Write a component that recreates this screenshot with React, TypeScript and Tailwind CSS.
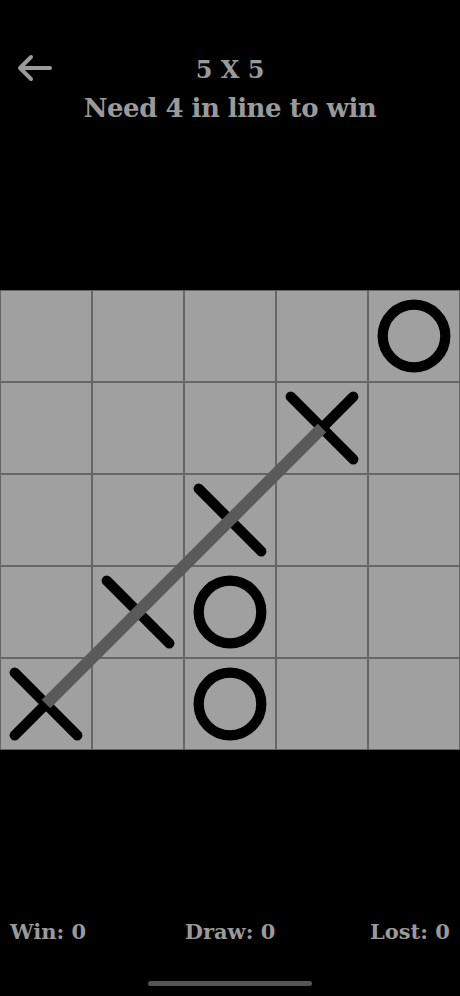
import React from 'react'

type Mark = 'X' | 'O' | null

const board: Mark[][] = [
  [null, null, null, null, 'O'],
  [null, null, null, 'X', null],
  [null, null, 'X', null, null],
  [null, 'X', 'O', null, null],
  ['X', null, 'O', null, null],
]

function Piece({ mark }: { mark: Mark }) {
  if (!mark) return null
  return (
    <svg viewBox="0 0 92 92" className="h-full w-full">
      {mark === 'O' ? (
        <circle cx="46" cy="46" r="32" fill="none" stroke="#000" strokeWidth="10.5" />
      ) : (
        <g stroke="#000" strokeWidth="10.5" strokeLinecap="round">
          <line x1="14" y1="14" x2="78" y2="78" />
          <line x1="78" y1="14" x2="14" y2="78" />
        </g>
      )}
    </svg>
  )
}

export default function App() {
  const serif = { fontFamily: '"DejaVu Serif", Georgia, serif' }

  return (
    <div className="flex h-[996px] w-[460px] flex-col bg-black text-[#9a9a9a]" style={serif}>
      {/* Header */}
      <div className="h-[290px] pt-[52px]">
        <div className="grid grid-cols-[60px_1fr_60px] items-start">
          <button className="flex h-[32px] items-center pl-[17px]">
            <svg width="36" height="28" viewBox="0 0 36 28" fill="none" stroke="#9a9a9a" strokeWidth="4" strokeLinecap="round" strokeLinejoin="round">
              <path d="M33 14H4" />
              <path d="M14 3 3 14l11 11" />
            </svg>
          </button>
          <div className="flex flex-col items-center">
            <span className="text-[24px] font-bold leading-[36px]">5 X 5</span>
            <span className="text-[26px] font-bold leading-[40px] tracking-[-0.5px]">Need 4 in line to win</span>
          </div>
          <div />
        </div>
      </div>

      {/* Board */}
      <div className="relative h-[460px] w-[460px]">
        <div className="grid grid-cols-5">
          {board.flat().map((m, i) => (
            <div key={i} className="h-[92px] border border-[#666] bg-[#a0a0a0]">
              <Piece mark={m} />
            </div>
          ))}
        </div>
        <svg className="pointer-events-none absolute inset-0" width="460" height="460" viewBox="0 0 460 460">
          <line x1="46" y1="414" x2="322" y2="138" stroke="#5a5a5a" strokeWidth="12" />
        </svg>
      </div>

      {/* Scores */}
      <div className="flex flex-1 flex-col">
        <div className="mt-[166px] grid grid-cols-3 items-center px-[10px] text-[21px] font-bold leading-[32px]">
          <span className="justify-self-start">Win: 0</span>
          <span className="justify-self-center">Draw: 0</span>
          <span className="justify-self-end">Lost: 0</span>
        </div>
        <div className="mt-[33px] flex justify-center">
          <div className="h-[5px] w-[164px] rounded-full bg-[#555]" />
        </div>
      </div>
    </div>
  )
}
